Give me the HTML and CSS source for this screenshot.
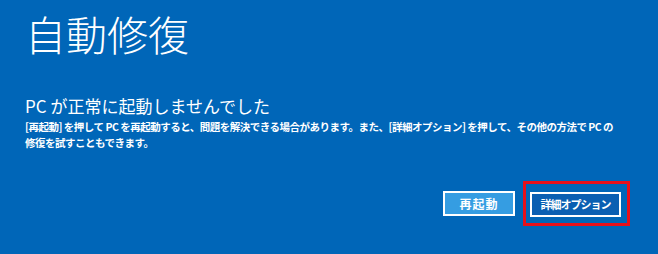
FILE: index.html
```html
<!DOCTYPE html>
<html lang="ja">
<head>
    <meta charset="UTF-8">
    <meta name="viewport" content="width=device-width, initial-scale=1.0">
    <title>自動修復</title>
    <link rel="stylesheet" href="styles.css">
</head>
<body>
    <div class="screen">
        <h1 class="title">自動修復</h1>
        <h2 class="heading">PC が正常に起動しませんでした</h2>
        <p class="message">
            [再起動] を押して PC を再起動すると、問題を解決できる場合があります。また、[詳細オプション] を押して、その他の方法で PC の<br>
            修復を試すこともできます。
        </p>
        <div class="actions">
            <button class="button restart-btn">再起動</button>
            <!-- 赤枠は注釈 -->
            <div class="highlight">
                <button class="button advanced-btn">詳細オプション</button>
            </div>
        </div>
    </div>
</body>
</html>
```

FILE: styles.css
```css
html, body {
    margin: 0;
    padding: 0;
    height: 100%;
}
body {
    background: #0066b8;
    color: #fff;
    font-family: "Noto Sans CJK JP", "Noto Sans", sans-serif;
    overflow: hidden;
}
.screen {
    padding: 13px 37px 0 25px;
}
.title {
    margin: 0;
    font-size: 41px;
    font-weight: 300;
    line-height: 41px;
}
.heading {
    margin: 42px 0 0;
    font-size: 17px;
    font-weight: 400;
    line-height: 20px;
}
.message {
    margin: 3px 0 0;
    font-size: 10.5px;
    font-weight: 700;
    line-height: 16px;
    letter-spacing: -0.5px;
    white-space: nowrap;
}
.actions {
    display: flex;
    justify-content: flex-end;
    align-items: center;
    gap: 8px;
    margin-top: 30px;
}
.button {
    box-sizing: border-box;
    height: 25px;
    border: 2px solid #fff;
    color: #fff;
    font-family: inherit;
    font-size: 11px;
    font-weight: 700;
    padding: 0;
}
.restart-btn {
    width: 72px;
    background: #359de2;
    font-size: 12px;
    letter-spacing: 1px;
}
.advanced-btn {
    width: 91px;
    background: #0a5fb2;
    letter-spacing: -1px;
}
.highlight {
    border: 3px solid #e8101a;
    padding: 6px 6px 6px 4px;
    margin-right: -9px;
}
```
